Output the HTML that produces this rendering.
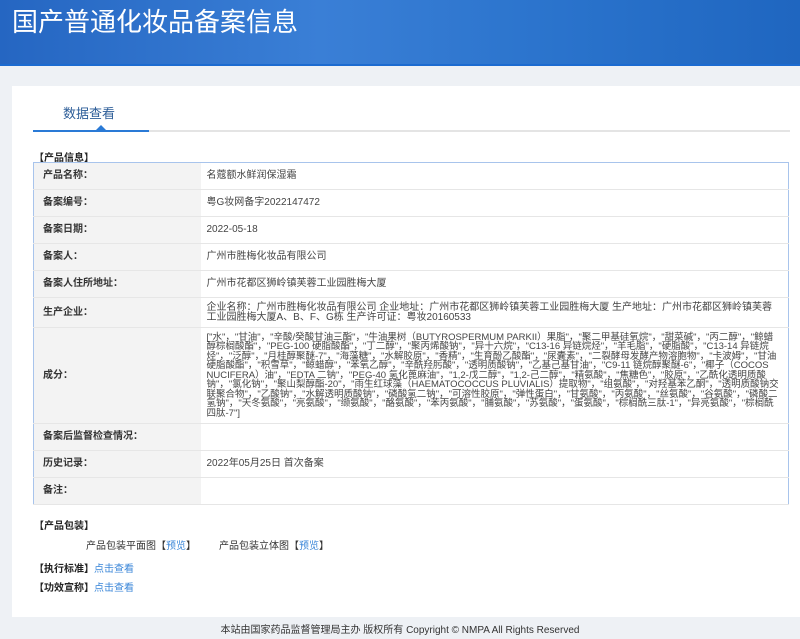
<!DOCTYPE html>
<html><head><meta charset="utf-8"><style>
*{margin:0;padding:0;box-sizing:border-box}
body{width:800px;height:639px;background:#eef1f5;font-family:"Liberation Sans","Noto Sans CJK SC",sans-serif;font-size:11px;color:#333;position:relative;overflow:hidden}
.hdr{position:absolute;left:0;top:0;width:800px;height:66px;background:linear-gradient(90deg,#2566c2 0%,#3a7fd6 40%,#2a73cc 70%,#1f66c0 100%);border-bottom:2px solid #1c6bd0}
.hdr h1{position:absolute;left:12px;top:2px;font-size:26px;font-weight:normal;color:#fff;letter-spacing:0px}
.card{position:absolute;left:12px;top:86px;width:788px;height:531px;background:#fff}
.tab{position:absolute;left:51px;top:17px;font-size:13px;color:#2c5d98}
.tl{position:absolute;left:21px;top:44px;width:757px;height:2px;background:#e4e4e4}
.tl2{position:absolute;left:21px;top:44px;width:116px;height:2px;background:#2a7ad6}
.tri{position:absolute;left:84px;top:39px;width:0;height:0;border-left:5px solid transparent;border-right:5px solid transparent;border-bottom:5px solid #2a7ad6}
.sec{position:absolute;left:22px;font-size:10px;font-weight:bold;color:#222}
table{position:absolute;left:21px;top:76px;width:756px;border-collapse:collapse;border:1px solid #a8c4ec}
td{border-bottom:1px solid #e6e6e6;font-size:10px;vertical-align:middle;line-height:12px}
td.l{width:167px;background:#f3f3f3;font-weight:bold;padding-left:9px;color:#333}
td.v{padding:0 6px;color:#444}
a{color:#3a86d8;text-decoration:none}
.foot{position:absolute;left:0;top:621px;width:800px;text-align:center;font-size:10px;color:#333}
</style></head><body>
<div class="hdr"><h1>国产普通化妆品备案信息</h1></div>
<div class="card">
<div class="tab">数据查看</div>
<div class="tl"></div><div class="tl2"></div><div class="tri"></div>
<div class="sec" style="top:63px">【产品信息】</div>
<table>
<tr style="height:27px"><td class="l">产品名称：</td><td class="v">名蔻额水鲜润保湿霜</td></tr>
<tr style="height:27px"><td class="l">备案编号：</td><td class="v">粤G妆网备字2022147472</td></tr>
<tr style="height:27px"><td class="l">备案日期：</td><td class="v">2022-05-18</td></tr>
<tr style="height:27px"><td class="l">备案人：</td><td class="v">广州市胜梅化妆品有限公司</td></tr>
<tr style="height:27px"><td class="l">备案人住所地址：</td><td class="v">广州市花都区狮岭镇芙蓉工业园胜梅大厦</td></tr>
<tr style="height:30px"><td class="l">生产企业：</td><td class="v" style="line-height:10px">企业名称：广州市胜梅化妆品有限公司 企业地址：广州市花都区狮岭镇芙蓉工业园胜梅大厦 生产地址：广州市花都区狮岭镇芙蓉工业园胜梅大厦A、B、F、G栋 生产许可证：粤妆20160533</td></tr>
<tr style="height:96px"><td class="l">成分：</td><td class="v" style="line-height:9.5px;font-size:9.5px">["水"，"甘油"，"辛酸/癸酸甘油三酯"，"牛油果树（BUTYROSPERMUM PARKII）果脂"，"聚二甲基硅氧烷"，"甜菜碱"，"丙二醇"，"鲸蜡醇棕榈酸酯"，"PEG-100 硬脂酸酯"，"丁二醇"，"聚丙烯酸钠"，"异十六烷"，"C13-16 异链烷烃"，"羊毛脂"，"硬脂酸"，"C13-14 异链烷烃"，"泛醇"，"月桂醇聚醚-7"，"海藻糖"，"水解胶原"，"香精"，"生育酚乙酸酯"，"尿囊素"，"二裂酵母发酵产物溶胞物"，"卡波姆"，"甘油硬脂酸酯"，"积雪草"，"鲸蜡醇"，"苯氧乙醇"，"辛酰羟肟酸"，"透明质酸钠"，"乙基己基甘油"，"C9-11 链烷醇聚醚-6"，"椰子（COCOS NUCIFERA）油"，"EDTA 二钠"，"PEG-40 氢化蓖麻油"，"1,2-戊二醇"，"1,2-己二醇"，"精氨酸"，"焦糖色"，"胶原"，"乙酰化透明质酸钠"，"氯化钠"，"聚山梨醇酯-20"，"雨生红球藻（HAEMATOCOCCUS PLUVIALIS）提取物"，"组氨酸"，"对羟基苯乙酮"，"透明质酸钠交联聚合物"，"乙酸钠"，"水解透明质酸钠"，"磷酸氢二钠"，"可溶性胶原"，"弹性蛋白"，"甘氨酸"，"丙氨酸"，"丝氨酸"，"谷氨酸"，"磷酸二氢钠"，"天冬氨酸"，"亮氨酸"，"缬氨酸"，"酪氨酸"，"苯丙氨酸"，"脯氨酸"，"苏氨酸"，"蛋氨酸"，"棕榈酰三肽-1"，"异亮氨酸"，"棕榈酰四肽-7"]</td></tr>
<tr style="height:27px"><td class="l">备案后监督检查情况：</td><td class="v"></td></tr>
<tr style="height:27px"><td class="l">历史记录：</td><td class="v">2022年05月25日 首次备案</td></tr>
<tr style="height:27px"><td class="l">备注：</td><td class="v"></td></tr>
</table>
<div class="sec" style="top:431px">【产品包装】</div>
<div style="position:absolute;left:74px;top:451px;font-size:10px">产品包装平面图【<a>预览</a>】</div>
<div style="position:absolute;left:207px;top:451px;font-size:10px">产品包装立体图【<a>预览</a>】</div>
<div class="sec" style="top:474px">【执行标准】<a style="font-weight:normal">点击查看</a></div>
<div class="sec" style="top:493px">【功效宣称】<a style="font-weight:normal">点击查看</a></div>
</div>
<div class="foot">本站由国家药品监督管理局主办 版权所有 Copyright © NMPA All Rights Reserved</div>
</body></html>
